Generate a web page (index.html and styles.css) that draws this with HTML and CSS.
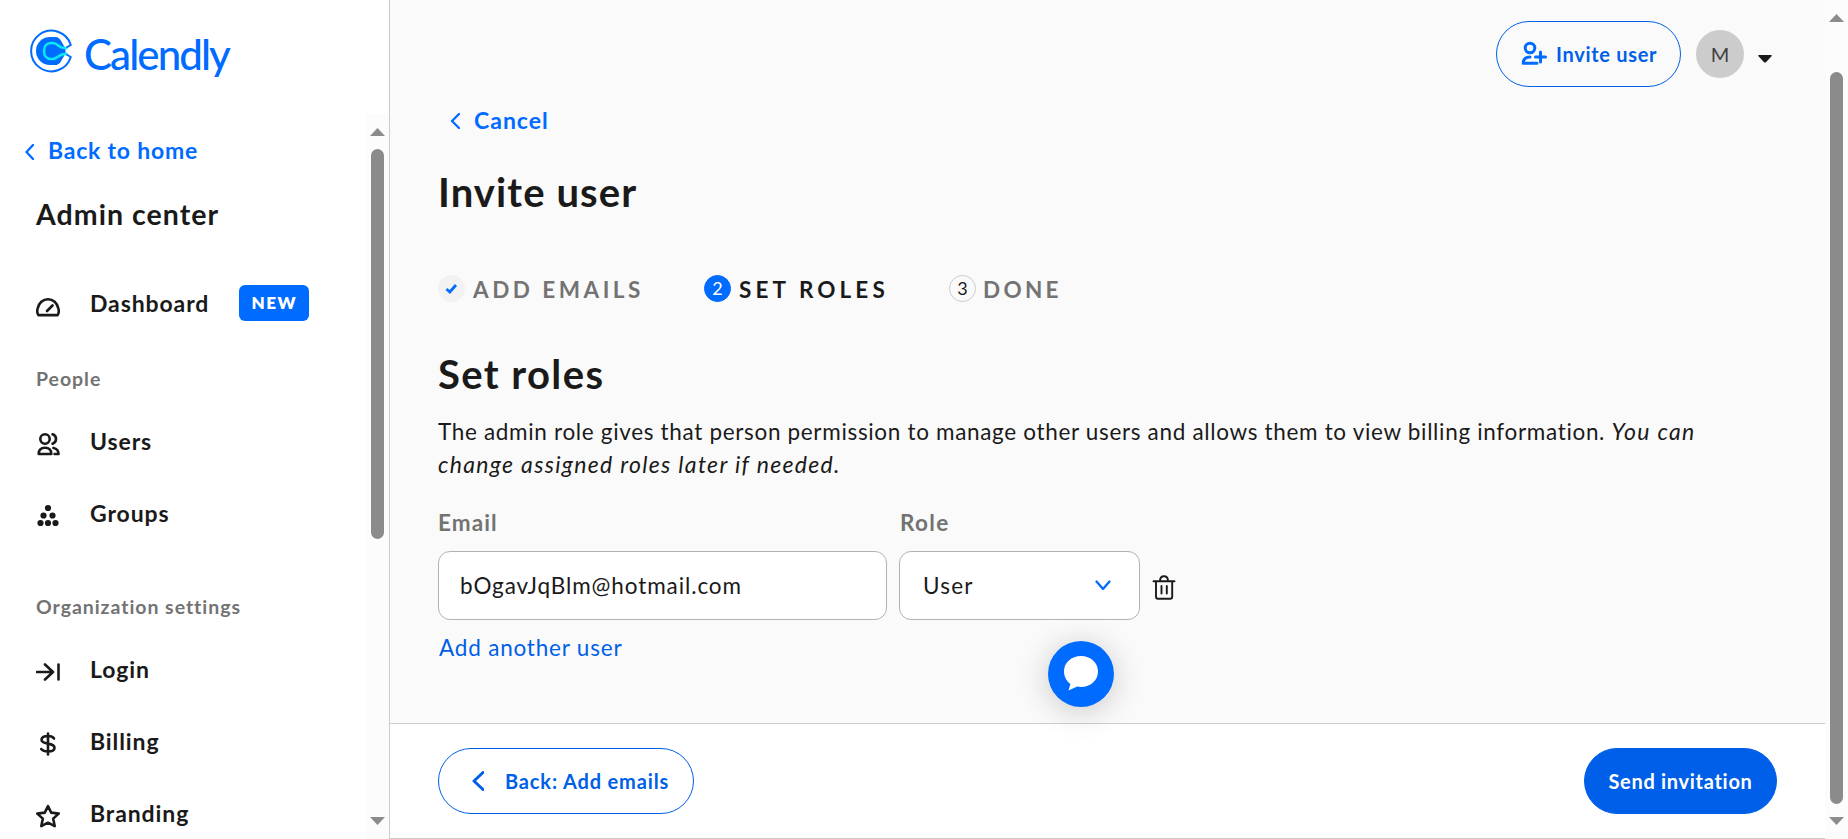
FILE: index.html
```html
<!DOCTYPE html>
<html lang="en">
<head>
<meta charset="utf-8">
<title>Invite user - Calendly</title>
<link rel="stylesheet" href="styles.css">
</head>
<body>
<aside class="sidebar">
  <div class="brand">
    <svg class="brand-mark" width="44" height="44" viewBox="0 0 44 44" fill="none">
      <circle cx="21" cy="22" r="14" fill="#006bff"/>
      <path d="M20 8h6.500c3.200 0 5 2.500 6.500 5.500l3.500 6v5l-3.500 6c-1.500 3-3.300 5.500-6.500 5.500H20z" fill="#006bff"/>
      <path d="M38.500 19.300 34 18.800c-4.500-.6-5.500-4.800-10.500-4.800H22c-4.500 0-7 3.300-7 8s2.500 8 7 8h1.500c5 0 6-4.200 10.500-4.800l4.500-.5" stroke="#0ae8f0" stroke-width="2.600"/>
      <path d="M37.500 18.500 41.800 16A20.300 20.300 0 1 0 41.800 28L37.500 25.500" stroke="#006bff" stroke-width="2" stroke-linejoin="round"/>
    </svg>
    <span class="brand-name">Calendly</span>
  </div>
  <div class="side-body">
    <nav class="nav">
      <a class="home-link"><svg width="9" height="16" viewBox="0 0 9 16"><path d="M8 1 1.500 8 8 15" class="line"/></svg>Back to home</a>
      <h2 class="nav-title">Admin center</h2>
      <a class="nav-item"><svg width="24" height="24" viewBox="0 0 24 24"><path d="M2.400 21.100h19.200c1.300-2 1.300-4.700.8-6.500C21.300 9 17 5.200 12 5.200S2.700 9 1.600 14.600c-.5 1.800-.5 4.500.8 6.500z" class="line"/><path d="m11 17 5.500-5.500" class="line"/></svg><span>Dashboard</span><b class="badge">NEW</b></a>
      <h3 class="nav-group people">People</h3>
      <a class="nav-item"><svg width="24" height="24" viewBox="0 0 24 24"><circle cx="9" cy="7" r="4.700" class="line"/><path d="M2.700 22c0-4 2.300-6.200 6.300-6.200s6.300 2.200 6.300 6.200zM16.500 2.300a4.900 4.900 0 0 1 0 9.400M17.500 15.900c3 .6 5 2.700 5.100 6.100h-4" class="line"/></svg><span>Users</span></a>
      <a class="nav-item"><svg width="24" height="24" viewBox="0 0 24 24" fill="#1a1a1a"><circle cx="12" cy="4" r="3.100"/><circle cx="7.500" cy="11.500" r="3.100"/><circle cx="16.500" cy="11.500" r="3.100"/><circle cx="4.500" cy="19" r="3.100"/><circle cx="12" cy="19" r="3.100"/><circle cx="19.500" cy="19" r="3.100"/></svg><span>Groups</span></a>
      <h3 class="nav-group">Organization settings</h3>
      <a class="nav-item"><svg width="24" height="24" viewBox="0 0 24 24"><path d="M1 12h16M9 4.500l8 7.500-8 7.500M22.500 4.500v15" class="line"/></svg><span>Login</span></a>
      <a class="nav-item"><svg width="24" height="24" viewBox="0 0 24 24"><path d="M18 6.500C17 4.700 15.500 4 12 4 8 4 5.500 5.300 5.500 7.800c0 5.400 13 2.200 13 7.900 0 2.500-2.500 3.800-6.500 3.800-3.500 0-5.500-.8-6.800-2.500M12 1.500v21" class="line"/></svg><span>Billing</span></a>
      <a class="nav-item"><svg width="24" height="24" viewBox="0 0 24 24"><path d="m12 2.200 3.200 6.400 7.500 1-5.500 5 1.500 7.600-6.700-3.500-6.700 3.500 1.500-7.600-5.500-5 7.500-1z" class="line"/></svg><span>Branding</span></a>
    </nav>
    <div class="scroll scroll-side"><i class="up"></i><i class="thumb"></i><i class="down"></i></div>
  </div>
</aside>
<main class="main">
  <header class="top">
    <button class="btn btn-invite"><svg width="26" height="26" viewBox="0 0 26 26"><circle cx="9" cy="7" r="4.800"/><path d="M9 16c-4 0-6.800 1.500-6.800 6.300H16M19.500 11v10M14.500 16h10"/></svg>Invite user</button>
    <span class="avatar">M</span>
    <svg class="caret" width="16" height="10" viewBox="0 0 16 10"><path d="M2 1h12c1 0 1 .8.500 1.300L9.200 8c-.7.800-1.700.8-2.400 0L1.500 2.300C1 1.800 1 1 2 1z" fill="#1a1a1a"/></svg>
  </header>
  <section class="content">
    <a class="cancel"><svg width="10" height="16" viewBox="0 0 10 16"><path d="M9 1 2 8l7 7" class="line"/></svg>Cancel</a>
    <h1 class="title">Invite user</h1>
    <ol class="steps">
      <li class="step emails"><span class="dot done"><svg width="13" height="11" viewBox="0 0 13 11"><path d="m1.500 6 3.300 3 6.200-7" fill="none" stroke="#006bff" stroke-width="2.800"/></svg></span>ADD EMAILS</li>
      <li class="step current"><span class="dot">2</span>SET ROLES</li>
      <li class="step finish"><span class="dot">3</span>DONE</li>
    </ol>
    <h1 class="title roles-title">Set roles</h1>
    <p class="intro">The admin role gives that person permission to manage other users and allows them to view billing information. <em>You can<br>change assigned roles later if needed.</em></p>
    <div class="fields">
      <label class="field"><span class="label">Email</span><span class="box email">bOgavJqBlm@hotmail.com</span></label>
      <label class="field"><span class="label label-role">Role</span><span class="box role">User<svg width="16" height="12" viewBox="0 0 16 12"><path d="m1.500 1.500 6.500 7.500 6.500-7.500" class="line"/></svg></span></label>
      <svg class="trash" width="24" height="26" viewBox="0 0 24 26"><path d="M1.500 6.200h21M4 6.500v15.300a2 2 0 0 0 2 2h12.200a2 2 0 0 0 2-2V6.500M8 6c0-3 1.300-4.700 4-4.700S16 3 16 6M9.500 11v7.500M14.800 11v7.500"/></svg>
    </div>
    <a class="add">Add another user</a>
  </section>
  <footer class="foot">
    <button class="btn btn-back"><svg width="12" height="20" viewBox="0 0 12 20"><path d="M11 1.500 2 10l9 8.500"/></svg>Back: Add emails</button>
    <button class="btn btn-send">Send invitation</button>
  </footer>
  <button class="chat"><svg width="34" height="36" viewBox="0 0 34 36"><path d="M17 0c9.600 0 17 6.700 17 15.500S26.600 31 17 31c-1.300 0-2.600-.1-3.800-.4L4.500 34.500 6.400 28C2.400 25 0 20.500 0 15.500 0 6.700 7.400 0 17 0z" fill="#fff"/></svg></button>
</main>
<div class="scroll scroll-page"><i class="up"></i><i class="thumb"></i><i class="down"></i></div>
</body>
</html>
```

FILE: styles.css
```css
* { box-sizing: border-box; margin: 0; padding: 0; }
body { display: flex; width: 1848px; height: 839px; overflow: hidden; background: #fff; color: #1a1a1a; font: 400 22.5px/30px Lato, "Liberation Sans", sans-serif; }
svg { display: block; flex: none; }
.line { fill: none; stroke: currentColor; stroke-width: 2.300; stroke-linecap: round; stroke-linejoin: round; }

/* Sidebar */
.sidebar { flex: none; width: 390px; height: 839px; display: flex; flex-direction: column; border-right: 1px solid #ccc; }
.brand { height: 114px; flex: none; display: flex; align-items: flex-start; padding: 29px 0 0 29px; gap: 11px; color: #006bff; }
.brand-name { font-size: 42px; line-height: 50px; letter-spacing: -1.9px; font-weight: 500; }
.side-body { flex: 1; display: flex; min-height: 0; }
.nav { flex: 1; overflow: hidden; padding: 21px 0 0 36px; }
.home-link { display: flex; align-items: center; gap: 14px; margin-left: -11px; font-size: 23px; font-weight: 700; letter-spacing: .8px; color: #006bff; }
.home-link svg { margin-top: 3px; }
.nav-title { font-size: 28.5px; line-height: 36px; font-weight: 700; letter-spacing: 1.05px; margin: 31px 0 53px; }
.nav-item { display: flex; align-items: center; height: 36px; margin-bottom: 36px; font-size: 23px; font-weight: 700; letter-spacing: .9px; }
.nav-item svg { margin: 6px 30px 0 0; }
.nav-item .line { stroke-width: 2.600; }
.badge { width: 70px; height: 36px; margin-left: 30px; border-radius: 6px; background: #006bff; color: #fff; font-size: 17px; line-height: 36px; font-weight: 800; letter-spacing: 1.6px; text-align: center; }
.nav-group { font-size: 19.5px; line-height: 26px; font-weight: 700; letter-spacing: .95px; color: #737373; margin: 63px 0 31px; }
.people { margin-top: 45px; }

/* Scrollbars */
.scroll { flex: none; width: 23px; background: #fcfcfc; display: flex; flex-direction: column; align-items: center; }
.scroll i { display: block; flex: none; }
.up, .down { width: 15px; height: 8px; background: #8b8b8b; }
.up { clip-path: polygon(50% 0, 100% 100%, 0 100%); }
.down { clip-path: polygon(0 0, 100% 0, 50% 100%); margin-top: auto; margin-bottom: 14px; }
.thumb { width: 13px; border-radius: 7px; background: #8b8b8b; margin-top: 13px; }
.scroll-side .up { margin-top: 14px; }
.scroll-side .thumb { height: 390px; }
.scroll-page .up { margin-top: 14px; }
.scroll-page .thumb { height: 732px; margin-top: 50px; }

/* Main */
.main { position: relative; flex: none; width: 1435px; height: 839px; background: #fafafa; display: flex; flex-direction: column; }
.top { height: 108px; display: flex; justify-content: flex-end; align-items: flex-start; padding: 21px 52px 0 0; }
.btn { display: flex; align-items: center; height: 66px; border: 1px solid #005fe8; border-radius: 33px; background: none; color: #005fe8; font: 700 20px/26px Lato, sans-serif; letter-spacing: .7px; white-space: nowrap; }
.btn svg { fill: none; stroke: currentColor; stroke-width: 3; stroke-linecap: round; stroke-linejoin: round; }
.btn-invite { width: 185px; padding-left: 24px; gap: 9px; }
.btn-invite svg { color: #006bff; }
.avatar { width: 48px; height: 48px; margin: 9px 13px 0 15px; border-radius: 50%; background: #ccc; color: #404040; font-size: 20px; line-height: 48px; text-align: center; }
.caret { margin-top: 33px; }
.content { flex: 1; padding-left: 48px; }
.cancel { display: flex; align-items: center; height: 30px; padding: 0 0 0 12px; margin-top: -3px; gap: 14px; font-size: 23px; font-weight: 700; letter-spacing: 1px; color: #006bff; }
.cancel svg { margin-top: 2px; }
.title { font-size: 40px; line-height: 48px; font-weight: 700; letter-spacing: 1.1px; margin-top: 33px; white-space: nowrap; }
.steps { display: flex; list-style: none; margin-top: 59px; height: 30px; font-size: 22.5px; font-weight: 700; color: #737373; }
.step { display: flex; align-items: center; white-space: nowrap; gap: 8px; }
.emails { width: 266px; letter-spacing: 3.500px; }
.current { width: 245px; letter-spacing: 4.100px; color: #1a1a1a; }
.finish { letter-spacing: 3.300px; gap: 7px; }
.dot { width: 27px; height: 27px; flex: none; display: flex; align-items: center; justify-content: center; border-radius: 50%; border: 1px solid #ccc; font-size: 18px; line-height: 25px; font-weight: 400; letter-spacing: 0; color: #1a1a1a; margin-top: -3px; }
.done { background: #f2f2f2; border-color: #f2f2f2; }
.current .dot { background: #006bff; border-color: #006bff; color: #fff; }
.roles-title { letter-spacing: 1.400px; margin-top: 45px; }
.intro { margin-top: 17px; line-height: 33px; letter-spacing: .67px; white-space: nowrap; }
.intro em { font-size: 23px; letter-spacing: 1.320px; }
.fields { display: flex; gap: 12px; margin-top: 27px; }
.field { display: flex; flex-direction: column; }
.label { font-weight: 700; letter-spacing: 1.1px; color: #737373; line-height: 30px; margin-bottom: 13px; }
.label-role { letter-spacing: 1.300px; padding-left: 1px; }
.box { display: flex; align-items: center; height: 69px; border: 1px solid #b2b2b2; border-radius: 12px; background: #fff; }
.email { width: 449px; padding-left: 21px; letter-spacing: .9px; }
.role { width: 241px; justify-content: space-between; padding: 0 28px 0 23px; letter-spacing: 1.2px; }
.role svg { color: #006bff; }
.trash { margin: 67px 0 0; fill: none; stroke: #1a1a1a; stroke-width: 1.900; stroke-linecap: round; }
.add { display: block; margin-top: 13px; padding-left: 1px; letter-spacing: .8px; color: #005fe8; }
.foot { height: 116px; flex: none; display: flex; justify-content: space-between; align-items: flex-start; padding: 24px 48px 0; background: #fff; border-top: 1px solid #ccc; border-bottom: 1px solid #ccc; }
.btn-back { width: 256px; padding-left: 33px; gap: 21px; letter-spacing: .85px; }
.btn-send { width: 193px; justify-content: center; background: #005fe8; color: #fff; }
.chat { position: absolute; left: 658px; top: 641px; width: 66px; height: 66px; border: 0; border-radius: 50%; background: #006bff; display: flex; align-items: center; justify-content: center; box-shadow: 0 4px 32px rgba(0, 0, 0, .2); }
```
